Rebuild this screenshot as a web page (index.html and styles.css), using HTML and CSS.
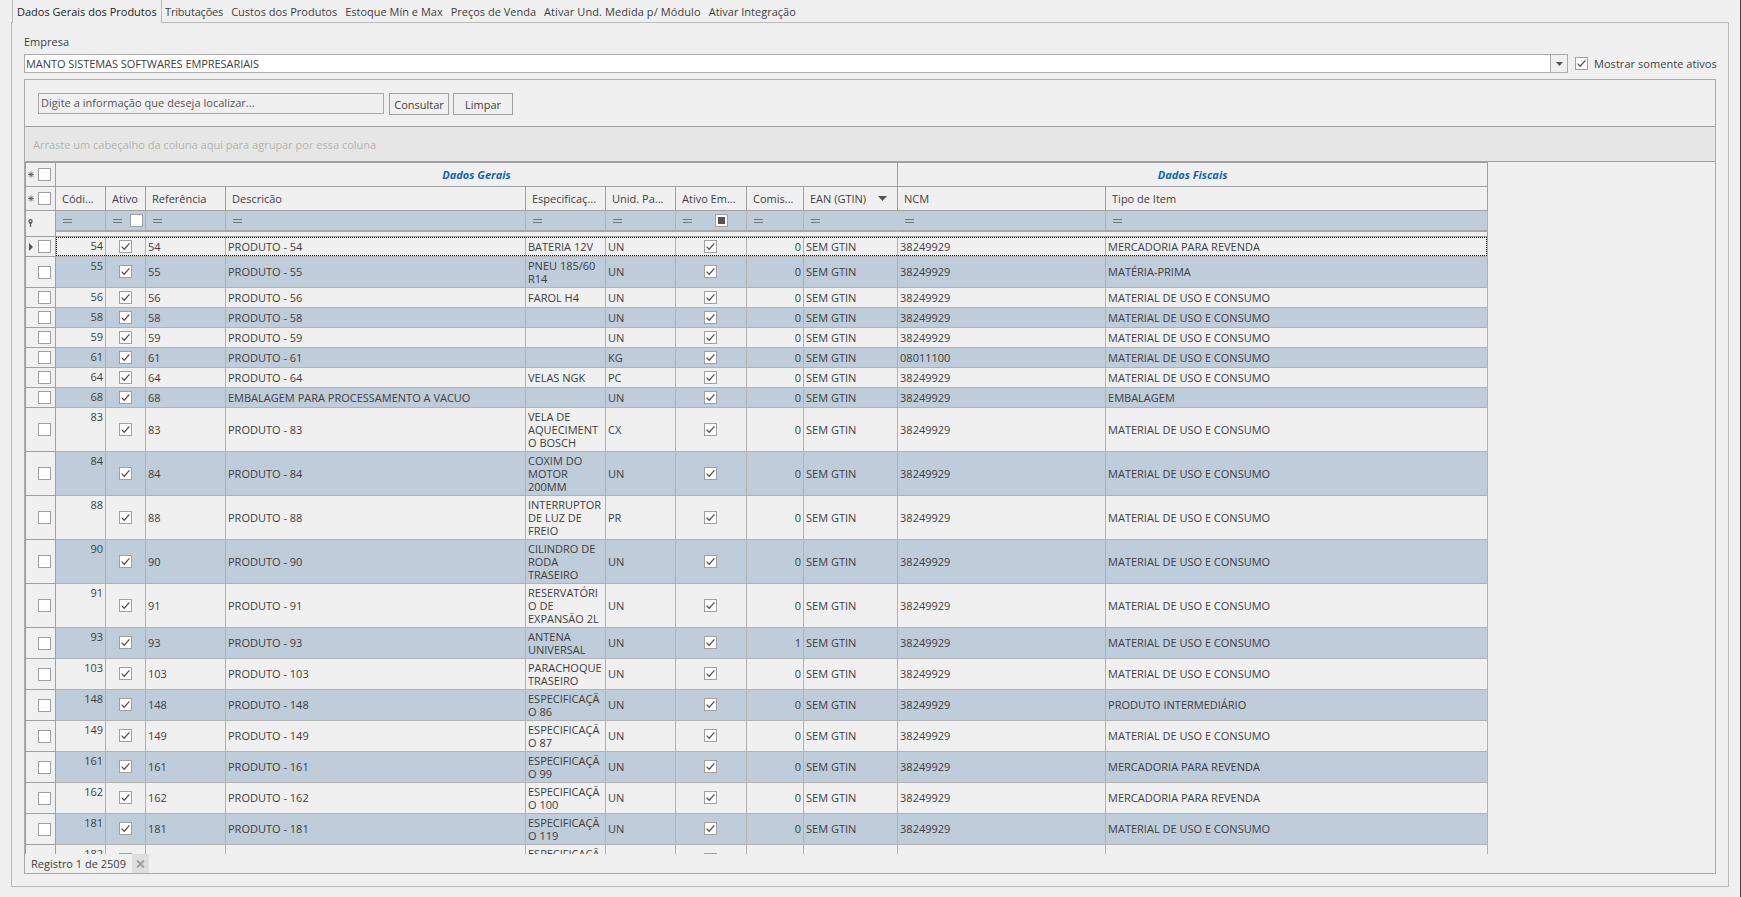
FILE: index.html
```
<!DOCTYPE html>
<html lang="pt-BR">
<head>
    <meta charset="UTF-8">
    <meta name="viewport" content="width=device-width, initial-scale=1.0">
    <title>Dados Gerais dos Produtos</title>
    <link rel="stylesheet" href="styles.css">
</head>
<body>
    <div class="window">
        <div class="tabs">
            <div class="tab active">Dados Gerais dos Produtos</div>
            <div class="tab tab-trib">Tributações</div>
            <div class="tab">Custos dos Produtos</div>
            <div class="tab">Estoque Mín e Max</div>
            <div class="tab">Preços de Venda</div>
            <div class="tab tab-medida">Ativar Und. Medida p/ Módulo</div>
            <div class="tab">Ativar Integração</div>
        </div>
        <div class="page">
            <label class="label">Empresa</label>
            <div class="company">
                <div class="combo">
                    <span class="combo-text">MANTO SISTEMAS SOFTWARES EMPRESARIAIS</span>
                    <span class="combo-button"><svg width="7" height="4" viewBox="0 0 7 4"><path d="M0 0H7L3.5 4Z" fill="#555"/></svg></span>
                </div>
                <span class="check"><svg viewBox="0 0 11 11"><path d="M1.6 5.6L4.2 8.2L9.4 2.4"/></svg></span>
                <span class="only-active">Mostrar somente ativos</span>
            </div>
            <div class="panel">
                <div class="search">
                    <div class="search-input">Digite a informação que deseja localizar...</div>
                    <button class="button">Consultar</button>
                    <button class="button">Limpar</button>
                </div>
                <div class="group-panel">Arraste um cabeçalho da coluna aqui para agrupar por essa coluna</div>
                <div class="grid">
                    <table>
                        <colgroup>
                            <col class="c-ind"><col class="c-cod"><col class="c-ativo"><col class="c-ref">
                            <col class="c-desc"><col class="c-esp"><col class="c-unid"><col class="c-emp">
                            <col class="c-com"><col class="c-ean"><col class="c-ncm"><col class="c-tipo">
                        </colgroup>
                        <thead>
                            <tr class="head">
                                <th><div class="ind"><svg class="star" viewBox="0 0 7 7"><path d="M3.5 0V7M0 3.5H7M1 1L6 6M6 1L1 6"/></svg><span class="check"></span></div></th>
                                <th class="band" colspan="9">Dados Gerais</th>
                                <th class="band" colspan="2">Dados Fiscais</th>
                            </tr>
                            <tr class="head">
                                <th><div class="ind"><svg class="star" viewBox="0 0 7 7"><path d="M3.5 0V7M0 3.5H7M1 1L6 6M6 1L1 6"/></svg><span class="check"></span></div></th>
                                <th>Códi...</th>
                                <th>Ativo</th>
                                <th>Referência</th>
                                <th>Descricão</th>
                                <th>Especificaç...</th>
                                <th>Unid. Pa...</th>
                                <th>Ativo Em...</th>
                                <th>Comis...</th>
                                <th><div class="sorted">EAN (GTIN)<svg width="9" height="5" viewBox="0 0 9 5"><path d="M0 0H9L4.5 5Z" fill="#555"/></svg></div></th>
                                <th>NCM</th>
                                <th>Tipo de Item</th>
                            </tr>
                            <tr class="filter">
                                <td class="filter-ind" rowspan="2"><svg width="5" height="8" viewBox="0 0 5 8"><circle cx="2.5" cy="2.3" r="1.6"/><path d="M1 4H4M2.5 4V8"/></svg></td>
                                <td><div class="op"><i></i></div></td>
                                <td><div class="op"><i></i><span class="check"></span></div></td>
                                <td><div class="op"><i></i></div></td>
                                <td><div class="op"><i></i></div></td>
                                <td><div class="op"><i></i></div></td>
                                <td><div class="op"><i></i></div></td>
                                <td><div class="op op-emp"><i></i><span class="check mixed"></span></div></td>
                                <td><div class="op"><i></i></div></td>
                                <td class="no-line"><div class="op"><i></i></div></td>
                                <td><div class="op"><i></i></div></td>
                                <td><div class="op"><i></i></div></td>
                            </tr>
                            <tr class="gap"><td colspan="11"></td></tr>
                        </thead>
                        <tbody id="rows"></tbody>
                    </table>
                </div>
                <div class="footer">
                    <span class="record">Registro 1 de 2509</span>
                    <span class="close"><svg width="9" height="8" viewBox="0 0 9 8"><path d="M1 0.5L8 7.5M8 0.5L1 7.5"/></svg></span>
                </div>
            </div>
        </div>
    </div>
    <script>
        const USO = "MATERIAL DE USO E CONSUMO";
        const REVENDA = "MERCADORIA PARA REVENDA";

        // código, especificação, unidade, tipo de item, outros valores
        const produtos = [
            [54, "BATERIA 12V", "UN", REVENDA],
            [55, "PNEU 185/60\nR14", "UN", "MATÉRIA-PRIMA"],
            [56, "FAROL H4", "UN", USO],
            [58, "", "UN", USO],
            [59, "", "UN", USO],
            [61, "", "KG", USO, { ncm: "08011100" }],
            [64, "VELAS NGK", "PC", USO],
            [68, "", "UN", "EMBALAGEM", { descricao: "EMBALAGEM PARA PROCESSAMENTO A VACUO" }],
            [83, "VELA DE\nAQUECIMENT\nO BOSCH", "CX", USO],
            [84, "COXIM DO\nMOTOR\n200MM", "UN", USO],
            [88, "INTERRUPTOR\nDE LUZ DE\nFREIO", "PR", USO],
            [90, "CILINDRO DE\nRODA\nTRASEIRO", "UN", USO],
            [91, "RESERVATÓRI\nO DE\nEXPANSÃO 2L", "UN", USO],
            [93, "ANTENA\nUNIVERSAL", "UN", USO, { comissao: 1 }],
            [103, "PARACHOQUE\nTRASEIRO", "UN", USO],
            [148, "ESPECIFICAÇÃ\nO 86", "UN", "PRODUTO INTERMEDIÁRIO"],
            [149, "ESPECIFICAÇÃ\nO 87", "UN", USO],
            [161, "ESPECIFICAÇÃ\nO 99", "UN", REVENDA],
            [162, "ESPECIFICAÇÃ\nO 100", "UN", REVENDA],
            [181, "ESPECIFICAÇÃ\nO 119", "UN", USO],
            [182, "ESPECIFICAÇÃ\nO 120", "UN", USO]
        ];

        const heights = { 1: 20, 2: 31, 3: 44 };
        const checked = '<span class="check"><svg viewBox="0 0 11 11"><path d="M1.6 5.6L4.2 8.2L9.4 2.4"/></svg></span>';
        const arrow = '<svg class="arrow" viewBox="0 0 4 8"><path d="M0 0L4 4L0 8Z"/></svg>';

        document.getElementById("rows").innerHTML = produtos.map((p, i) => {
            const [codigo, espec, unidade, tipo, extra = {}] = p;
            const lines = espec.split("\n").length;
            return `<tr class="row-${lines}${i === 0 ? " focused" : ""}" style="height: ${heights[lines]}px">
                <td><div class="ind">${i === 0 ? arrow : ""}<span class="check"></span></div></td>
                <td class="code">${codigo}</td>
                <td class="center">${checked}</td>
                <td>${codigo}</td>
                <td>${extra.descricao || "PRODUTO - " + codigo}</td>
                <td class="espec">${espec}</td>
                <td>${unidade}</td>
                <td class="center emp">${checked}</td>
                <td class="number">${extra.comissao || 0}</td>
                <td>SEM GTIN</td>
                <td>${extra.ncm || "38249929"}</td>
                <td>${tipo}</td>
            </tr>`;
        }).join("");
    </script>
</body>
</html>
```
FILE: styles.css
```
*, *::before, *::after {
    box-sizing: border-box;
}
body {
    margin: 0;
    background: #f0f0f0;
    font-family: "Open Sans", "Noto Sans", sans-serif;
    font-size: 11px;
    line-height: 13px;
    color: #3e3e3e;
    overflow: hidden;
}
svg {
    display: block;
}
.window {
    height: 897px;
    padding: 0 11px 10px 11px;
    border-right: 1px solid #444;
    display: flex;
    flex-direction: column;
}
.tabs {
    display: flex;
    height: 23px;
    padding-left: 1px;
    white-space: nowrap;
}
.tab {
    height: 22px;
    padding: 5px 0 0 4px;
    margin-right: 4px;
}
.tab.active {
    width: 150px;
    height: 23px;
    margin-right: 0;
    padding-left: 4px;
    border-left: 1px solid #bbb;
    border-right: 1px solid #bbb;
    background: #f0f0f0;
    color: #222;
    z-index: 1;
}
.tab-trib {
    padding-left: 3px;
    letter-spacing: -0.18px;
}
.tab-medida {
    letter-spacing: 0.09px;
}
.page {
    flex: 1;
    margin-top: -1px;
    padding: 12px 12px 12px;
    border: 1px solid #bbb;
    display: flex;
    flex-direction: column;
}
.label {
    height: 19px;
}
.company {
    display: flex;
    align-items: center;
    height: 19px;
    margin-bottom: 6px;
}
.combo {
    display: flex;
    flex: none;
    width: 1544px;
    height: 19px;
    margin-right: 7px;
    border: 1px solid #ababab;
    background: #fff;
}
.combo-text {
    flex: 1;
    padding: 2px 0 0 1px;
    letter-spacing: -0.06px;
}
.combo-button {
    width: 17px;
    border-left: 1px solid #ababab;
    background: #f0f0f0;
    display: flex;
    align-items: center;
    justify-content: center;
}
.check {
    display: block;
    flex: none;
    width: 13px;
    height: 13px;
    border: 1px solid #a0a0a0;
    background: #fff;
}
.check path {
    fill: none;
    stroke: #555;
    stroke-width: 1.3;
}
.only-active {
    margin-left: 6px;
    white-space: nowrap;
    letter-spacing: 0.05px;
}
.panel {
    flex: 1;
    border: 1px solid #ababab;
    display: flex;
    flex-direction: column;
    min-height: 0;
}
.search {
    display: flex;
    height: 46px;
    padding: 13px 0 0 13px;
}
.search-input {
    width: 346px;
    height: 21px;
    margin-right: 5px;
    padding: 2px;
    border: 1px solid #ababab;
    color: #555;
    letter-spacing: 0.03px;
}
.button {
    width: 60px;
    height: 22px;
    margin: 0 4px 0 0;
    padding: 0;
    border: 1px solid #a0a0a0;
    background: #f0f0f0;
    color: #3e3e3e;
    font: inherit;
}
.group-panel {
    height: 36px;
    padding: 11px 8px 0;
    border-top: 1px solid #a0a0a0;
    border-bottom: 1px solid #a0a0a0;
    background: #e6e6e6;
    color: #b4b4b4;
}
.grid {
    height: 692px;
    overflow: hidden;
}
table {
    width: 1463px;
    table-layout: fixed;
    border-collapse: separate;
    border-spacing: 0;
    border-top: 1px solid #a0a0a0;
    border-left: 1px solid #a0a0a0;
}
.c-ind { width: 30px; }
.c-cod { width: 50px; }
.c-ativo { width: 40px; }
.c-ref { width: 80px; }
.c-desc { width: 300px; }
.c-esp { width: 80px; }
.c-unid { width: 70px; }
.c-emp { width: 71px; }
.c-com { width: 57px; }
.c-ean { width: 94px; }
.c-ncm { width: 208px; }
.c-tipo { width: 382px; }
th, td {
    padding: 0 2px;
    border-right: 1px solid #b2b2b2;
    border-bottom: 1px solid #b2b2b2;
    text-align: left;
    white-space: nowrap;
    overflow: hidden;
}
.head {
    height: 24px;
}
.head th {
    padding: 0 0 0 6px;
    border-color: #a0a0a0;
    font-weight: normal;
}
.head .band {
    padding: 0;
    text-align: center;
    font-weight: bold;
    font-style: italic;
    color: #0f66b5;
}
.ind {
    display: flex;
    align-items: center;
    justify-content: flex-end;
    padding-right: 2px;
}
.head th:first-child {
    padding: 0 2px;
}
.star {
    width: 7px;
    height: 7px;
    margin-right: 4px;
}
.star path {
    stroke: #555;
    stroke-width: 1;
    fill: none;
}
.arrow {
    width: 4px;
    height: 8px;
    margin-right: 5px;
}
.arrow path {
    fill: #555;
}
.sorted {
    display: flex;
    align-items: center;
    justify-content: space-between;
    padding-right: 10px;
}
.filter {
    height: 21px;
}
.filter td {
    padding: 0;
    background: #bfccd9;
    border-bottom: 2px solid #a8a8a8;
}
.filter .filter-ind {
    padding: 0 0 1px 2px;
    background: #f0f0f0;
    border-bottom: 1px solid #a0a0a0;
    border-right-color: #a0a0a0;
}
.filter-ind svg {
    fill: none;
    stroke: #555;
    stroke-width: 1.2;
}
.filter .no-line {
    border-right-color: #bfccd9;
}
.op {
    display: flex;
    align-items: center;
    height: 19px;
    padding: 0 2px 0 7px;
    justify-content: space-between;
}
.op i {
    width: 9px;
    height: 4px;
    margin-top: 1px;
    border-top: 1px solid #777;
    border-bottom: 1px solid #777;
}
.op-emp {
    padding-right: 18px;
}
.mixed {
    padding: 2px;
}
.mixed::before {
    content: "";
    display: block;
    height: 7px;
    background: #555;
}
.gap {
    height: 5px;
}
.gap td {
    padding: 0;
    border-color: #a0a0a0;
}
tbody tr:nth-child(even) td {
    background: #bfccd9;
}
tbody tr:nth-child(n) td:first-child {
    background: #f0f0f0;
    border-color: #a0a0a0;
}
.row-2 td:not(:first-child) {
    padding-bottom: 1px;
}
.code {
    vertical-align: top;
    text-align: right;
    padding-top: 2px;
}
.number {
    text-align: right;
}
.center .check {
    margin: 0 auto;
}
.center.emp {
    padding-right: 4px;
}
.espec {
    white-space: pre;
}
.focused {
    position: relative;
}
.focused::after {
    content: "";
    position: absolute;
    left: 30px;
    top: 0;
    width: 1431px;
    height: 19px;
    border: 1px dotted #000;
}
.footer {
    display: flex;
    height: 19px;
}
.record {
    width: 107px;
    padding: 3px 0 0 6px;
}
.close {
    width: 17px;
    background: #dedede;
    display: flex;
    align-items: center;
    justify-content: center;
}
.close path {
    stroke: #a0a0a0;
    stroke-width: 2;
}
```
